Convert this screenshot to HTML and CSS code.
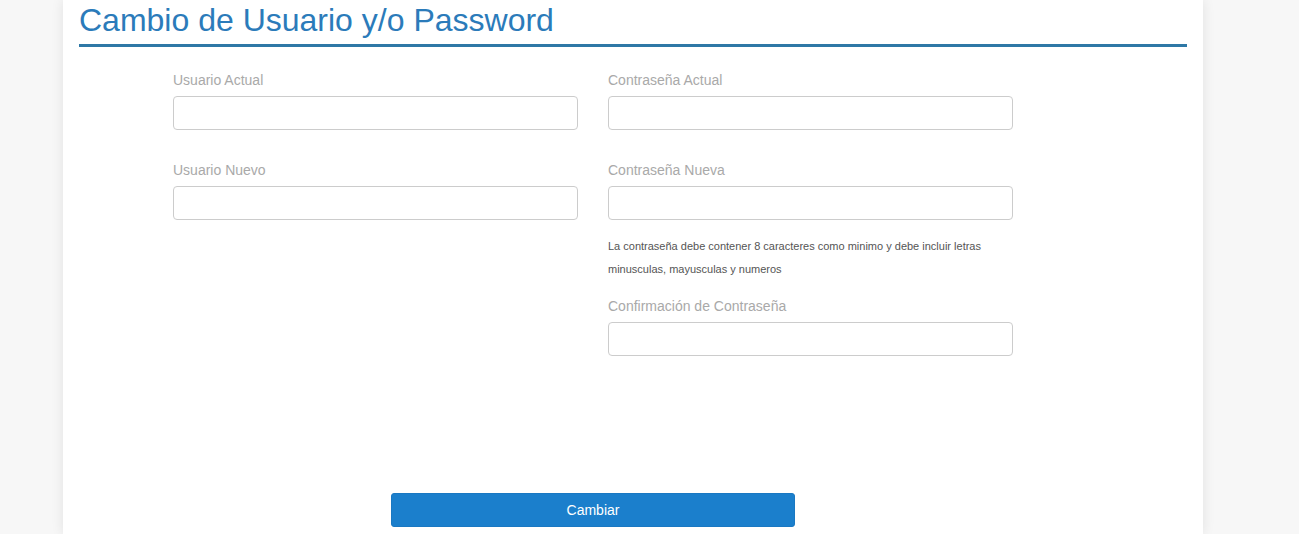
FILE: index.html
```html
<!DOCTYPE html>
<html lang="es">
<head>
<meta charset="utf-8">
<title>Cambio de Usuario y/o Password</title>
<link rel="stylesheet" href="styles.css">
</head>
<body>
<div class="card">
  <h1 class="title">Cambio de Usuario y/o Password</h1>
  <form class="form">
    <div class="grid">
      <div class="col">
        <div class="field">
          <label class="label">Usuario Actual</label>
          <input class="input" type="text">
        </div>
        <div class="field">
          <label class="label">Usuario Nuevo</label>
          <input class="input" type="text">
        </div>
      </div>
      <div class="col">
        <div class="field">
          <label class="label">Contraseña Actual</label>
          <input class="input" type="password">
        </div>
        <div class="field">
          <label class="label">Contraseña Nueva</label>
          <input class="input" type="password">
          <p class="help">La contraseña debe contener 8 caracteres como minimo y debe incluir letras minusculas, mayusculas y numeros</p>
        </div>
        <div class="field">
          <label class="label">Confirmación de Contraseña</label>
          <input class="input" type="password">
        </div>
      </div>
    </div>
    <div class="actions">
      <button class="btn" type="button">Cambiar</button>
    </div>
  </form>
</div>
</body>
</html>
```
FILE: styles.css
```css
html, body {
  margin: 0;
  padding: 0;
  background: #f7f7f7;
  font-family: "Liberation Sans", Arial, sans-serif;
}
.card {
  margin-left: 63px;
  width: 1140px;
  min-height: 534px;
  background: #fff;
  box-shadow: 0 0 12px rgba(0, 0, 0, 0.09);
  padding: 0 16px;
  box-sizing: border-box;
}
.title {
  margin: 0;
  padding: 2px 0 6px;
  font-size: 32px;
  line-height: 36px;
  font-weight: normal;
  color: #2b7bba;
  border-bottom: 3px solid #2e78a6;
}
.form {
  padding: 0 0 0 94px;
  width: 840px;
}
.grid {
  display: grid;
  grid-template-columns: 405px 405px;
  column-gap: 30px;
  padding-top: 23px;
}
.col {
  display: flex;
  flex-direction: column;
}
.field {
  display: flex;
  flex-direction: column;
  margin-bottom: 30px;
}
.col .field:last-child {
  margin-bottom: 0;
}
.label {
  font-size: 14px;
  line-height: 20px;
  color: #a9a9a9;
  margin-bottom: 6px;
}
.input {
  height: 34px;
  box-sizing: border-box;
  border: 1px solid #cccccc;
  border-radius: 4px;
  margin: 0;
  padding: 6px 12px;
  font-size: 14px;
  font-family: inherit;
  background: #fff;
}
.help {
  margin: 15px 0 -15px;
  font-size: 11px;
  line-height: 23px;
  color: #555;
  padding-right: 20px;
}
.actions {
  display: flex;
  justify-content: center;
  padding-top: 137px;
}
.btn {
  width: 404px;
  height: 34px;
  border: 1px solid #1a78c2;
  border-radius: 3px;
  background: #1b7fcc;
  color: #fff;
  font-family: inherit;
  font-size: 14px;
  cursor: pointer;
}
```
